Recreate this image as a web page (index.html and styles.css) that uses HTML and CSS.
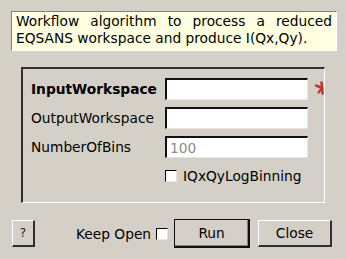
FILE: index.html
```html
<!DOCTYPE html>
<html>
<head>
<meta charset="utf-8">
<link rel="stylesheet" href="styles.css">
</head>
<body>
<div class="dialog">
  <div class="desc">Workflow algorithm to process a reduced EQSANS workspace and produce I(Qx,Qy).</div>
  <div class="group">
    <div class="row">
      <span class="label bold">InputWorkspace</span>
      <span class="field"></span>
      <svg class="star" width="10" height="14" viewBox="0 0 10 14">
        <path d="M6.5 1.5 L7.5 12.5" stroke="#c0392b" stroke-width="2.6" stroke-linecap="round"/>
        <path d="M1 4.5 L7 7" stroke="#c0392b" stroke-width="2.6" stroke-linecap="round"/>
        <path d="M7 7 L3.5 11.5" stroke="#c0392b" stroke-width="2.2" stroke-linecap="round"/>
      </svg>
    </div>
    <div class="row">
      <span class="label">OutputWorkspace</span>
      <span class="field"></span>
    </div>
    <div class="row">
      <span class="label">NumberOfBins</span>
      <span class="field"><span class="ph">100</span></span>
    </div>
    <div class="checkrow">
      <span class="check"></span>
      <span class="checklabel">IQxQyLogBinning</span>
    </div>
  </div>
  <div class="buttons">
    <span class="btn help">?</span>
    <span class="keep">Keep Open</span>
    <span class="check keepcheck"></span>
    <span class="btn run">Run</span>
    <span class="btn close">Close</span>
  </div>
</div>
</body>
</html>
```
FILE: styles.css
```css
html, body {
  margin: 0;
  padding: 0;
  background: #d4d0c8;
}
body {
  width: 346px;
  height: 259px;
  overflow: hidden;
  font-family: "DejaVu Sans", sans-serif;
  font-size: 13.75px;
  color: #000;
}
.dialog {
  display: flex;
  flex-direction: column;
}
.desc {
  margin: 11px 0 0 11px;
  width: 316px;
  height: 37px;
  padding: 1px 4px 0 4px;
  background: #ffffe1;
  border-style: solid;
  border-width: 1px;
  border-color: #808080 #ffffff #ffffff #808080;
  line-height: 17px;
  text-align: justify;
  text-align-last: left;
}
.group {
  margin: 16px 0 0 21px;
  width: 301px;
  height: 124px;
  border-style: solid;
  border-width: 2px 1px 1px 2px;
  border-color: #303030 #ffffff #ffffff #303030;
  padding: 9px 0 0 0;
  display: flex;
  flex-direction: column;
  gap: 7px;
}
.row {
  position: relative;
  display: flex;
  align-items: center;
  height: 22px;
}
.label {
  width: 134px;
  padding-left: 8px;
  white-space: nowrap;
}
.bold {
  font-weight: bold;
}
.field {
  box-sizing: border-box;
  width: 143px;
  height: 22px;
  background: #fff;
  border-style: solid;
  border-width: 2px 1px 1px 2px;
  border-color: #101010 #e8e6e0 #e8e6e0 #101010;
  display: flex;
  align-items: center;
  padding-left: 3px;
}
.ph {
  color: #8a8a8a;
}
.star {
  position: absolute;
  left: 292px;
  top: 3px;
}
.checkrow {
  display: flex;
  align-items: center;
  padding-left: 142px;
  height: 14px;
  margin-top: 4px;
}
.check {
  box-sizing: border-box;
  width: 12px;
  height: 12px;
  background: #fff;
  border-style: solid;
  border-width: 1px;
  border-color: #000 #e8e6e0 #e8e6e0 #000;
  display: inline-block;
  flex: none;
}
.checklabel {
  margin-left: 6px;
}
.buttons {
  display: flex;
  align-items: center;
  margin: 16px 0 0 12px;
  height: 29px;
}
.btn {
  box-sizing: border-box;
  display: flex;
  align-items: center;
  justify-content: center;
  height: 27px;
  border-style: solid;
  border-width: 1px 2px 2px 1px;
  border-color: #ffffff #303030 #303030 #ffffff;
  flex: none;
}
.help {
  width: 23px;
  font-size: 12px;
  color: #222;
}
.keep {
  margin-left: 41px;
  white-space: nowrap;
}
.keepcheck {
  margin-left: 5px;
}
.run {
  margin-left: 6px;
  width: 76px;
  height: 29px;
  border-width: 1px 2px 2px 1px;
  border-color: #ffffff #101010 #101010 #ffffff;
  outline: 1px solid #101010;
  outline-offset: -1px;
  box-shadow: inset -1px -1px 0 #808080;
}
.close {
  margin-left: 8px;
  width: 74px;
}
```
